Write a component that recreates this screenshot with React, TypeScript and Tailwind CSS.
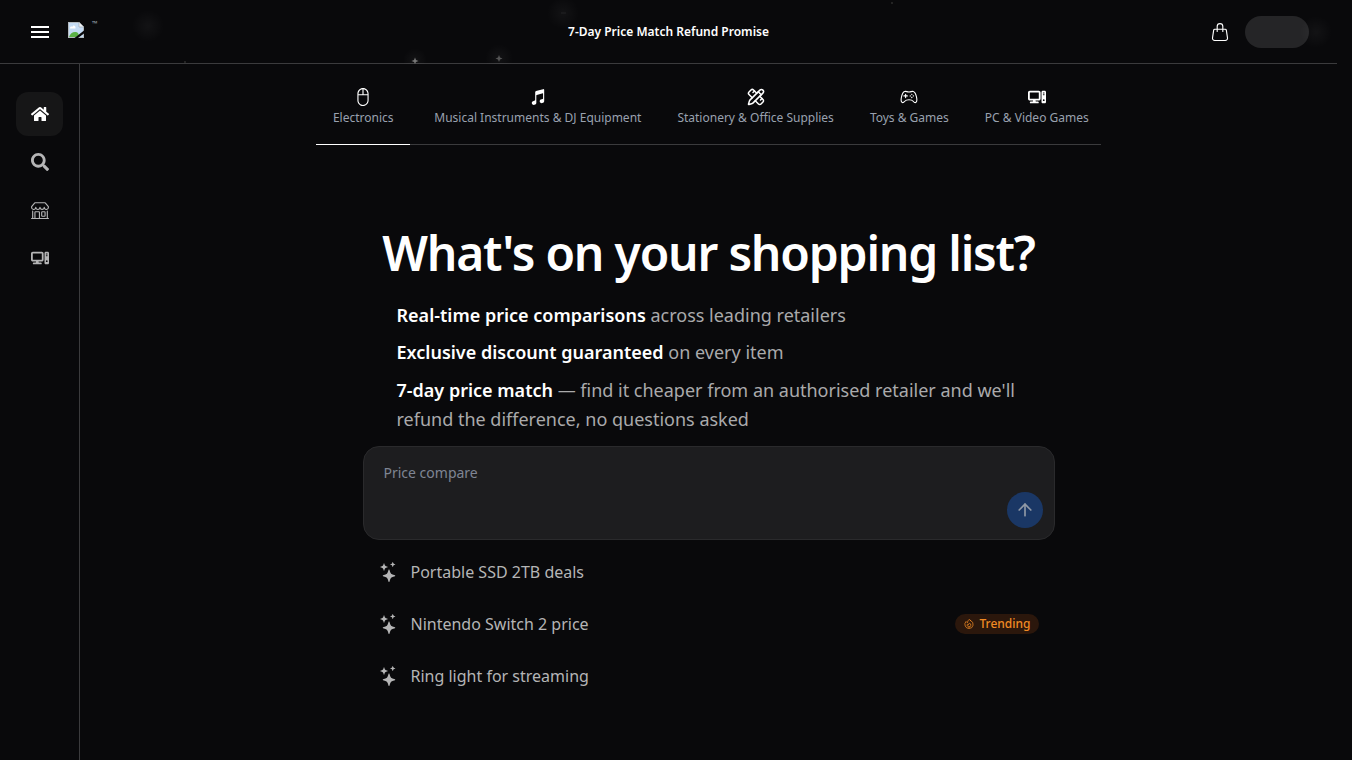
import React, { useState } from 'react';
import { MdMenu } from 'react-icons/md';
import { FaHome, FaSearch } from 'react-icons/fa';
import { FaComputer } from 'react-icons/fa6';
import { BsHandbag, BsMouse2, BsShop, BsStars } from 'react-icons/bs';
import { IoGameControllerOutline, IoMusicalNotes } from 'react-icons/io5';
import { HiOutlineFire } from 'react-icons/hi2';
import { LuArrowUp, LuPencilRuler } from 'react-icons/lu';

const navItems = [
  { label: 'Home', icon: <FaHome size={18} />, active: true },
  { label: 'Search', icon: <FaSearch size={18} /> },
  { label: 'Stores', icon: <BsShop size={18} /> },
  { label: 'PC & Video Games', icon: <FaComputer size={18} /> },
];

const categories = [
  { label: 'Electronics', icon: <BsMouse2 size={18} />, width: 'min-w-[94px]' },
  { label: 'Musical Instruments & DJ Equipment', icon: <IoMusicalNotes size={18} />, width: '' },
  { label: 'Stationery & Office Supplies', icon: <LuPencilRuler size={18} />, width: '' },
  { label: 'Toys & Games', icon: <IoGameControllerOutline size={18} />, width: '' },
  { label: 'PC & Video Games', icon: <FaComputer size={18} />, width: '' },
];

const suggestions = [
  { text: 'Portable SSD 2TB deals', trending: false },
  { text: 'Nintendo Switch 2 price', trending: true },
  { text: 'Ring light for streaming', trending: false },
];

const Stars: React.FC = () => (
  <svg className="absolute left-0 top-0 h-16 w-full pointer-events-none" aria-hidden="true">
    <defs>
      <radialGradient id="glow">
        <stop offset="0" stopColor="#fff" stopOpacity="0.04" />
        <stop offset="1" stopColor="#fff" stopOpacity="0" />
      </radialGradient>
    </defs>
    <circle cx="148" cy="26" r="16" fill="url(#glow)" />
    <circle cx="563" cy="13" r="16" fill="url(#glow)" />
    <circle cx="415" cy="60" r="12" fill="url(#glow)" />
    <circle cx="499" cy="58" r="14" fill="url(#glow)" />
    <circle cx="1316" cy="32" r="16" fill="url(#glow)" />
    <path d="M415 57.500l1 2.500 2.500 1-2.500 1-1 2-1-2-2.500-1 2.500-1z" fill="#777" />
    <path d="M499 55l1 2.500 2.500 1-2.500 1-1 2.500-1-2.500-2.500-1 2.500-1z" fill="#555" />
    <path d="M561 13h5" stroke="#333" strokeOpacity="0.5" />
    <circle cx="185" cy="62" r="1" fill="#2c2c2c" />
    <circle cx="892" cy="3" r="1" fill="#2c2c2c" />
  </svg>
);

const BrokenImage: React.FC = () => (
  <svg width="16" height="16" viewBox="0 0 16 16" role="img" aria-label="Logo">
    <path d="M0 0h11l5 5v11H0z" fill="#b4babf" />
    <path d="M1 1h10v4h4v10H1z" fill="#c5dcf5" />
    <path d="M2 6.500c0-2 1.500-2.500 2.500-1.500C5 2.500 8 3.500 7.500 6.500z" fill="#fff" />
    <path d="M1 15c1-3.500 4-5.500 7-5 2 0.500 3 2 3 5z" fill="#5cb247" />
    <path d="M11 0l5 5h-5z" fill="#eef1f4" stroke="#8d959c" strokeWidth="0.500" />
    <path d="M16 8.500L6.500 16H10l6-4.500z" fill="#09090b" />
  </svg>
);

const App: React.FC = () => {
  const [query, setQuery] = useState('');
  const [tab, setTab] = useState('Electronics');

  return (
    <div className="min-h-screen flex flex-col bg-[#09090b] pr-[15px] text-white font-['Noto_Sans',sans-serif]">
      <header className="relative h-16 shrink-0 grid grid-cols-[1fr_auto_1fr] items-center border-b border-[#3b3b3d] pl-7 pr-7">
        <Stars />
        <div className="flex items-center gap-4">
          <button type="button" aria-label="Menu">
            <MdMenu size={24} />
          </button>
          <a href="#" className="flex h-6 items-start">
            <span className="pt-0.5">
              <BrokenImage />
            </span>
            <span className="pl-2 text-[7px] leading-none text-gray-400">™</span>
          </a>
        </div>
        <p className="text-xs font-semibold">7-Day Price Match Refund Promise</p>
        <div className="flex items-center justify-end gap-4">
          <button type="button" aria-label="Basket">
            <BsHandbag size={18} />
          </button>
          <div className="h-8 w-16 rounded-full bg-[#252527]" />
        </div>
      </header>

      <div className="flex flex-1">
        <nav className="w-20 shrink-0 border-r border-[#3b3b3d] px-4 pt-7 flex flex-col gap-1">
          {navItems.map((item) => (
            <a
              key={item.label}
              href="#"
              aria-label={item.label}
              className={`flex h-11 items-center justify-center rounded-xl ${
                item.active ? 'bg-[#161617] text-white' : 'text-[#b5b5b6]'
              }`}
            >
              {item.icon}
            </a>
          ))}
        </nav>

        <main className="flex-1 flex flex-col items-center">
          <div className="flex gap-3 border-b border-[#3b3b3d]">
            {categories.map((cat) => (
              <button
                key={cat.label}
                type="button"
                onClick={() => setTab(cat.label)}
                className={`-mb-px flex h-[81px] flex-col items-center border-b px-3 pt-6 ${cat.width} ${
                  tab === cat.label ? 'border-white' : 'border-transparent'
                }`}
              >
                {cat.icon}
                <span className="pt-1 text-xs text-gray-400">{cat.label}</span>
              </button>
            ))}
          </div>

          <section className="w-full max-w-[692px] pt-20">
            <h1 className="text-center text-5xl font-semibold tracking-tight leading-[56px]">
              What's on your shopping list?
            </h1>
            <ul className="mt-5 space-y-2 pl-[34px] pr-4 text-lg leading-relaxed text-[#aaaaab]">
              <li>
                <strong className="font-semibold text-white">Real-time price comparisons</strong> across leading retailers
              </li>
              <li>
                <strong className="font-semibold text-white">Exclusive discount guaranteed</strong> on every item
              </li>
              <li>
                <strong className="font-semibold text-white">7-day price match</strong> — find it cheaper from an authorised
                retailer and we'll refund the difference, no questions asked
              </li>
            </ul>

            <form
              onSubmit={(e) => e.preventDefault()}
              className="mt-3 flex h-[94px] items-end rounded-2xl border border-[#2a2a2c] bg-[#1d1d1f] pl-5 pr-[11px] pt-4 pb-[11px]"
            >
              <textarea
                value={query}
                onChange={(e) => setQuery(e.target.value)}
                placeholder="Price compare"
                aria-label="Price compare"
                className="h-full flex-1 resize-none bg-transparent text-sm outline-none placeholder:text-[#7f8593]"
              />
              <button
                type="submit"
                aria-label="Send"
                className="flex size-9 items-center justify-center rounded-full bg-[#1a3765] text-[#9099a6]"
              >
                <LuArrowUp size={20} />
              </button>
            </form>

            <div className="mt-2 flex flex-col gap-1">
              {suggestions.map((s) => (
                <button key={s.text} type="button" className="flex h-12 items-center px-4 text-left text-[#b5b5b6]">
                  <BsStars size={20} />
                  <span className="flex-1 pl-3">{s.text}</span>
                  {s.trending && (
                    <span className="flex h-5 items-center gap-1 rounded-full bg-[#2b170c] px-2 text-xs font-medium text-[#f08a24]">
                      <HiOutlineFire size={12} />
                      Trending
                    </span>
                  )}
                </button>
              ))}
            </div>
          </section>
        </main>
      </div>
    </div>
  );
};

export default App;
